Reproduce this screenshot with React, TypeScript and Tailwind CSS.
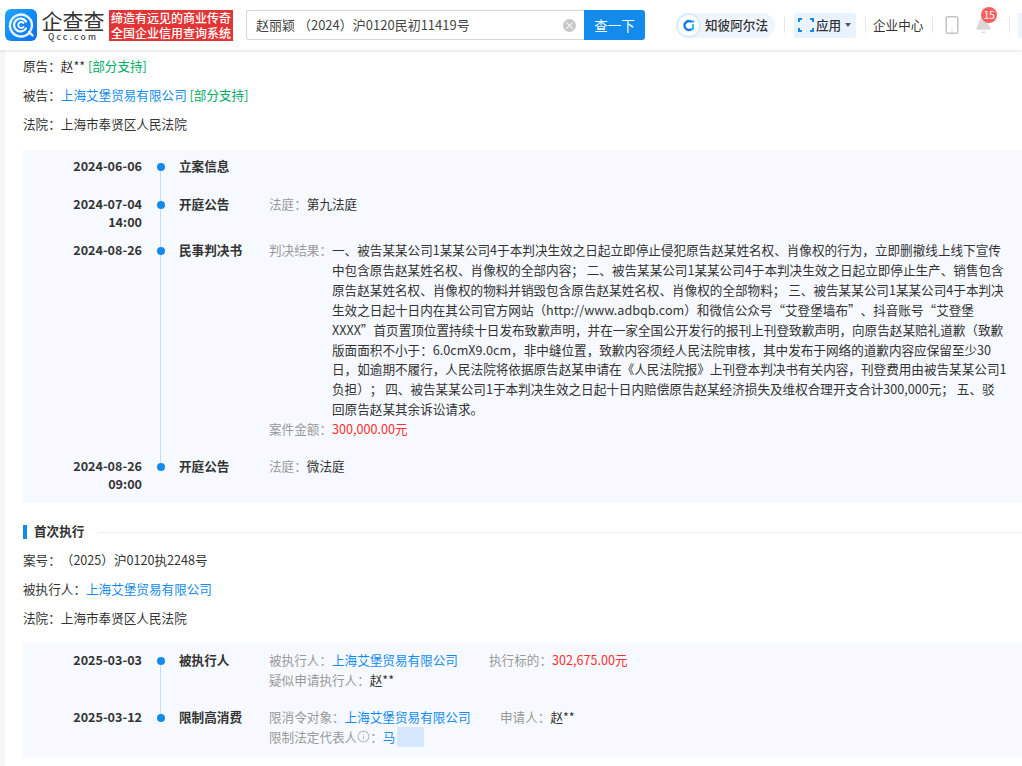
import { ReactNode } from "react";
import { Info, Smartphone, Bell } from "lucide-react";

function Logo() {
  return (
    <svg width="32" height="32" viewBox="0 0 32 32" className="shrink-0">
      <defs>
        <linearGradient id="lg" x1="0" y1="0" x2="1" y2="1">
          <stop offset="0" stopColor="#1fa6ff" />
          <stop offset="1" stopColor="#0b6ff0" />
        </linearGradient>
      </defs>
      <rect width="32" height="32" rx="6" fill="url(#lg)" />
      <path d="M24.5 23.5A11 11 0 1 1 27 16c0 2-.5 4-1.500 5.500" fill="none" stroke="#fff" strokeWidth="2.400" strokeLinecap="round" opacity="0.9" />
      <path d="M21 12.500A6.500 6.500 0 1 0 21 19.500" fill="none" stroke="#fff" strokeWidth="2.200" strokeLinecap="round" />
      <path d="M18.500 14A3 3 0 1 0 18.500 18" fill="none" stroke="#fff" strokeWidth="1.800" strokeLinecap="round" />
      <path d="M24 23l3.500 3.500" stroke="#fff" strokeWidth="2.400" strokeLinecap="round" />
    </svg>
  );
}

function Header() {
  return (
    <header className="relative z-10 h-[50px] bg-white flex items-center shadow-[0_1px_3px_rgba(0,0,0,0.12)] overflow-hidden">
      <div className="ml-[5px] flex items-center shrink-0">
        <Logo />
        <div className="ml-[4px] w-[64px] flex flex-col items-center">
          <div className="text-[21px] leading-[23px] text-[#333] whitespace-nowrap">企查查</div>
          <div className="text-[8.500px] leading-[9px] text-[#444] font-medium tracking-[2.200px] whitespace-nowrap">Qcc.com</div>
        </div>
        <div className="ml-[4px] w-[124px] h-[31px] bg-[#e23535] text-white text-[12px] leading-[15px] font-medium flex flex-col items-center justify-center whitespace-nowrap">
          <div>缔造有远见的商业传奇</div>
          <div>全国企业信用查询系统</div>
        </div>
      </div>
      <div className="ml-[13px] w-[399px] h-[30px] flex shrink-0">
        <div className="flex-1 flex items-center border border-[#d6d6d6] border-r-0 rounded-l-[3px] pl-[9px] pr-[8px]">
          <span className="flex-1 text-[13px] text-[#444] whitespace-nowrap">赵丽颖 （2024）沪0120民初11419号</span>
          <span className="w-[13px] h-[13px] rounded-full bg-[#c8c8c8] text-white text-[11px] leading-[13px] text-center">×</span>
        </div>
        <button className="w-[61px] bg-[#128bed] text-white text-[13.500px] rounded-r-[3px]">查一下</button>
      </div>
      <div className="ml-[31px] h-[25px] flex items-center bg-[#eef5fe] rounded-full pr-[7px] shrink-0">
        <span className="w-[25px] h-[25px] rounded-full bg-white border-[2px] border-[#dcebfd] flex items-center justify-center">
          <svg width="15" height="15" viewBox="0 0 15 15">
            <path d="M10 3.500A4.500 4.500 0 1 0 10 11.500" fill="none" stroke="#1379f0" strokeWidth="2.400" strokeLinecap="round" />
            <rect x="11" y="6" width="2" height="6" rx="1" fill="#22b8f0" />
            <circle cx="12" cy="3.500" r="1.300" fill="#22b8f0" />
          </svg>
        </span>
        <span className="ml-[4px] text-[12.600px] font-medium text-[#333] whitespace-nowrap">知彼阿尔法</span>
      </div>
      <span className="ml-[9px] w-px h-[16px] bg-[#e6e6e6] shrink-0" />
      <div className="ml-[9px] w-[62px] h-[25px] bg-[#e9f3ff] rounded-[2px] flex items-center pl-[4px] shrink-0">
        <span className="relative w-[16px] h-[14px] shrink-0">
          <span className="absolute left-0 top-0 w-[4px] h-[4px] border-l-2 border-t-2 border-[#128bed]" />
          <span className="absolute right-0 top-0 w-[4px] h-[4px] border-r-2 border-t-2 border-[#128bed]" />
          <span className="absolute left-0 bottom-0 w-[4px] h-[4px] border-l-2 border-b-2 border-[#128bed]" />
          <span className="absolute right-0 bottom-0 w-[4px] h-[4px] border-r-2 border-b-2 border-[#128bed]" />
        </span>
        <span className="ml-[2px] text-[12.600px] font-medium text-[#333] whitespace-nowrap">应用</span>
        <span className="ml-[4px] w-0 h-0 border-x-[3.500px] border-x-transparent border-t-[4px] border-t-[#555]" />
      </div>
      <span className="ml-[9px] w-px h-[16px] bg-[#e6e6e6] shrink-0" />
      <span className="ml-[7px] text-[12.600px] text-[#333] whitespace-nowrap shrink-0">企业中心</span>
      <span className="ml-[9px] w-px h-[16px] bg-[#e6e6e6] shrink-0" />
      <Smartphone size={20} strokeWidth={1.800} className="ml-[9px] text-[#c4c4c4] shrink-0" />
      <span className="relative ml-[13px] shrink-0">
        <Bell size={17} className="text-[#d8d8d8] fill-[#d8d8d8]" />
        <span className="absolute -top-[10px] left-[6px] w-[16px] h-[16px] rounded-full bg-[#ff5f5f] text-white text-[10px] leading-[16px] text-center">15</span>
      </span>
      <span className="ml-[17px] w-px h-[16px] bg-[#e6e6e6] shrink-0" />
      <span className="ml-[8px] w-[20px] h-[25px] bg-[#eef3fe] shrink-0" />
    </header>
  );
}

function Link({ children }: { children: ReactNode }) {
  return <span className="text-[#128bed]">{children}</span>;
}

function Label({ children }: { children: ReactNode }) {
  return <span className="text-[#999]">{children}</span>;
}

function Money({ children }: { children: ReactNode }) {
  return <span className="text-[#fd2d2d]">{children}</span>;
}

function Support() {
  return <span className="text-[#00ad65]">[部分支持]</span>;
}

function Meta({ children }: { children: ReactNode }) {
  return <div className="h-[29px] leading-[29px] text-[#333] whitespace-nowrap">{children}</div>;
}

interface RowProps {
  date: string;
  time?: string;
  title: string;
  last?: boolean;
  className: string;
  children?: ReactNode;
}

function Row({ date, time, title, last, className, children }: RowProps) {
  return (
    <div className={`flex ${className}`}>
      <div className="w-[119px] -mt-px text-right font-bold text-[#333] leading-[18px] shrink-0">
        <div>{date}</div>
        {time && <div>{time}</div>}
      </div>
      <div className="relative w-[37px] shrink-0 flex justify-center">
        {!last && <span className="absolute left-[18px] top-[9px] -bottom-[6px] w-px bg-[#bfdfff]" />}
        <span className="relative mt-[5px] w-[8px] h-[8px] rounded-full bg-[#128bed]" />
      </div>
      <div className="w-[90px] -mt-px font-bold text-[#333] leading-[18px] shrink-0">{title}</div>
      <div className="flex-1 min-w-0 text-[#333] leading-[19.900px] -mt-[2px]">{children}</div>
    </div>
  );
}

const judgment =
  "一、被告某某公司1某某公司4于本判决生效之日起立即停止侵犯原告赵某姓名权、肖像权的行为，立即删撤线上线下宣传中包含原告赵某姓名权、肖像权的全部内容； 二、被告某某公司1某某公司4于本判决生效之日起立即停止生产、销售包含原告赵某姓名权、肖像权的物料并销毁包含原告赵某姓名权、肖像权的全部物料； 三、被告某某公司1某某公司4于本判决生效之日起十日内在其公司官方网站（http://www.adbqb.com）和微信公众号“艾登堡墙布”、抖音账号“艾登堡XXXX”首页置顶位置持续十日发布致歉声明，并在一家全国公开发行的报刊上刊登致歉声明，向原告赵某赔礼道歉（致歉版面面积不小于：6.0cmX9.0cm，非中缝位置，致歉内容须经人民法院审核，其中发布于网络的道歉内容应保留至少30日，如逾期不履行，人民法院将依据原告赵某申请在《人民法院报》上刊登本判决书有关内容，刊登费用由被告某某公司1负担）； 四、被告某某公司1于本判决生效之日起十日内赔偿原告赵某经济损失及维权合理开支合计300,000元； 五、驳";

export default function App() {
  return (
    <div className="w-[1022px] h-[766px] overflow-hidden bg-[#f6f6f6] text-[12.600px] [text-spacing-trim:space-all] font-['Noto_Sans_CJK_SC',sans-serif]">
      <Header />
      <main className="ml-[5px] bg-white h-[716px] pl-[18px] pt-[1px]">
        <Meta>原告：赵** <Support /></Meta>
        <Meta>被告：<Link>上海艾堡贸易有限公司</Link> <Support /></Meta>
        <Meta>法院：上海市奉贤区人民法院</Meta>

        <section className="mt-[12px] h-[353px] bg-[#f6f9ff] pt-[8px]">
          <Row date="2024-06-06" title="立案信息" className="h-[38px]" />
          <Row date="2024-07-04" time="14:00" title="开庭公告" className="h-[46px]">
            <Label>法庭：</Label>第九法庭
          </Row>
          <Row date="2024-08-26" title="民事判决书" className="h-[216px]">
            <div className="flex">
              <span className="w-[63px] shrink-0 text-[#999]">判决结果：</span>
              <p className="w-[676px]">
                {judgment}
                <br />
                回原告赵某其余诉讼请求。
              </p>
            </div>
            <div><Label>案件金额：</Label><Money>300,000.00元</Money></div>
          </Row>
          <Row date="2024-08-26" time="09:00" title="开庭公告" last className="h-[40px]">
            <Label>法庭：</Label>微法庭
          </Row>
        </section>

        <div className="mt-[18px] h-[22px] flex items-center">
          <span className="w-[4px] h-[14px] bg-[#128bed]" />
          <h3 className="ml-[7px] -mt-[2px] font-bold text-[#333] whitespace-nowrap">首次执行</h3>
          <span className="ml-[14px] flex-1 h-px bg-[#eee]" />
        </div>
        <div className="mt-[2px]">
          <Meta>案号：（2025）沪0120执2248号</Meta>
          <Meta>被执行人：<Link>上海艾堡贸易有限公司</Link></Meta>
          <Meta>法院：上海市奉贤区人民法院</Meta>
        </div>

        <section className="mt-[11px] h-[114px] bg-[#f6f9ff] pt-[9px]">
          <Row date="2025-03-03" title="被执行人" className="h-[57px]">
            <div className="flex">
              <span className="w-[220px]"><Label>被执行人：</Label><Link>上海艾堡贸易有限公司</Link></span>
              <span><Label>执行标的：</Label><Money>302,675.00元</Money></span>
            </div>
            <div><Label>疑似申请执行人：</Label>赵**</div>
          </Row>
          <Row date="2025-03-12" title="限制高消费" last className="h-[40px]">
            <div className="flex">
              <span className="w-[231px]"><Label>限消令对象：</Label><Link>上海艾堡贸易有限公司</Link></span>
              <span><Label>申请人：</Label>赵**</span>
            </div>
            <div className="flex items-center">
              <Label>限制法定代表人</Label>
              <Info size={13} className="text-[#bbb]" />
              <Label>：</Label>
              <Link>马</Link>
              <span className="ml-[2px] w-[27px] h-[20px] bg-[#d5e8fd]" />
            </div>
          </Row>
        </section>
      </main>
    </div>
  );
}
